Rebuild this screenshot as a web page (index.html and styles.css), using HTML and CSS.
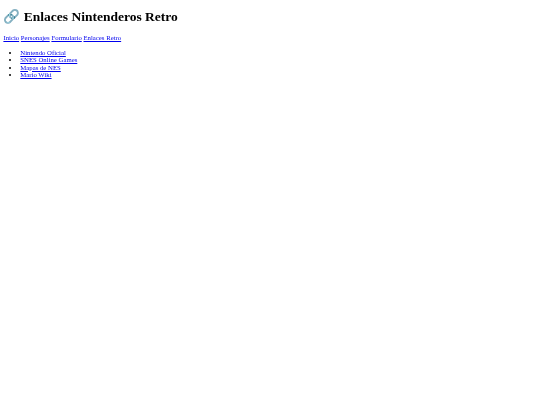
FILE: index.html
```html
<!DOCTYPE html>
<html>
<head>
  <meta charset="UTF-8">
  <title>Enlaces Nintenderos Retro</title>
  <link rel="stylesheet" href="styles.css">
</head>
<body>
  <h1>🔗 Enlaces Nintenderos Retro</h1>
  <nav class="main-nav">
    <a href="#">Inicio</a>
    <a href="#">Personajes</a>
    <a href="#">Formulario</a>
    <a href="#">Enlaces Retro</a>
  </nav>
  <ul class="link-list">
    <li><a href="#">Nintendo Oficial</a></li>
    <li><a href="#">SNES Online Games</a></li>
    <li><a href="#">Mapas de NES</a></li>
    <li><a href="#">Mario Wiki</a></li>
  </ul>
</body>
</html>
```

FILE: styles.css
```css
body {
  margin: 3.4px;
  font-family: "Liberation Serif", serif;
  font-size: 6.75px;
  line-height: 7.6px;
  background-color: white;
  color: black;
  filter: blur(0.25px);
}
h1 {
  font-size: 13.5px;
  line-height: 15.5px;
  margin: 5.6px 0 9.8px;
}
a {
  color: #0000ee;
}
.link-list {
  margin: 6.75px 0;
  padding-left: 16.9px;
}
```
